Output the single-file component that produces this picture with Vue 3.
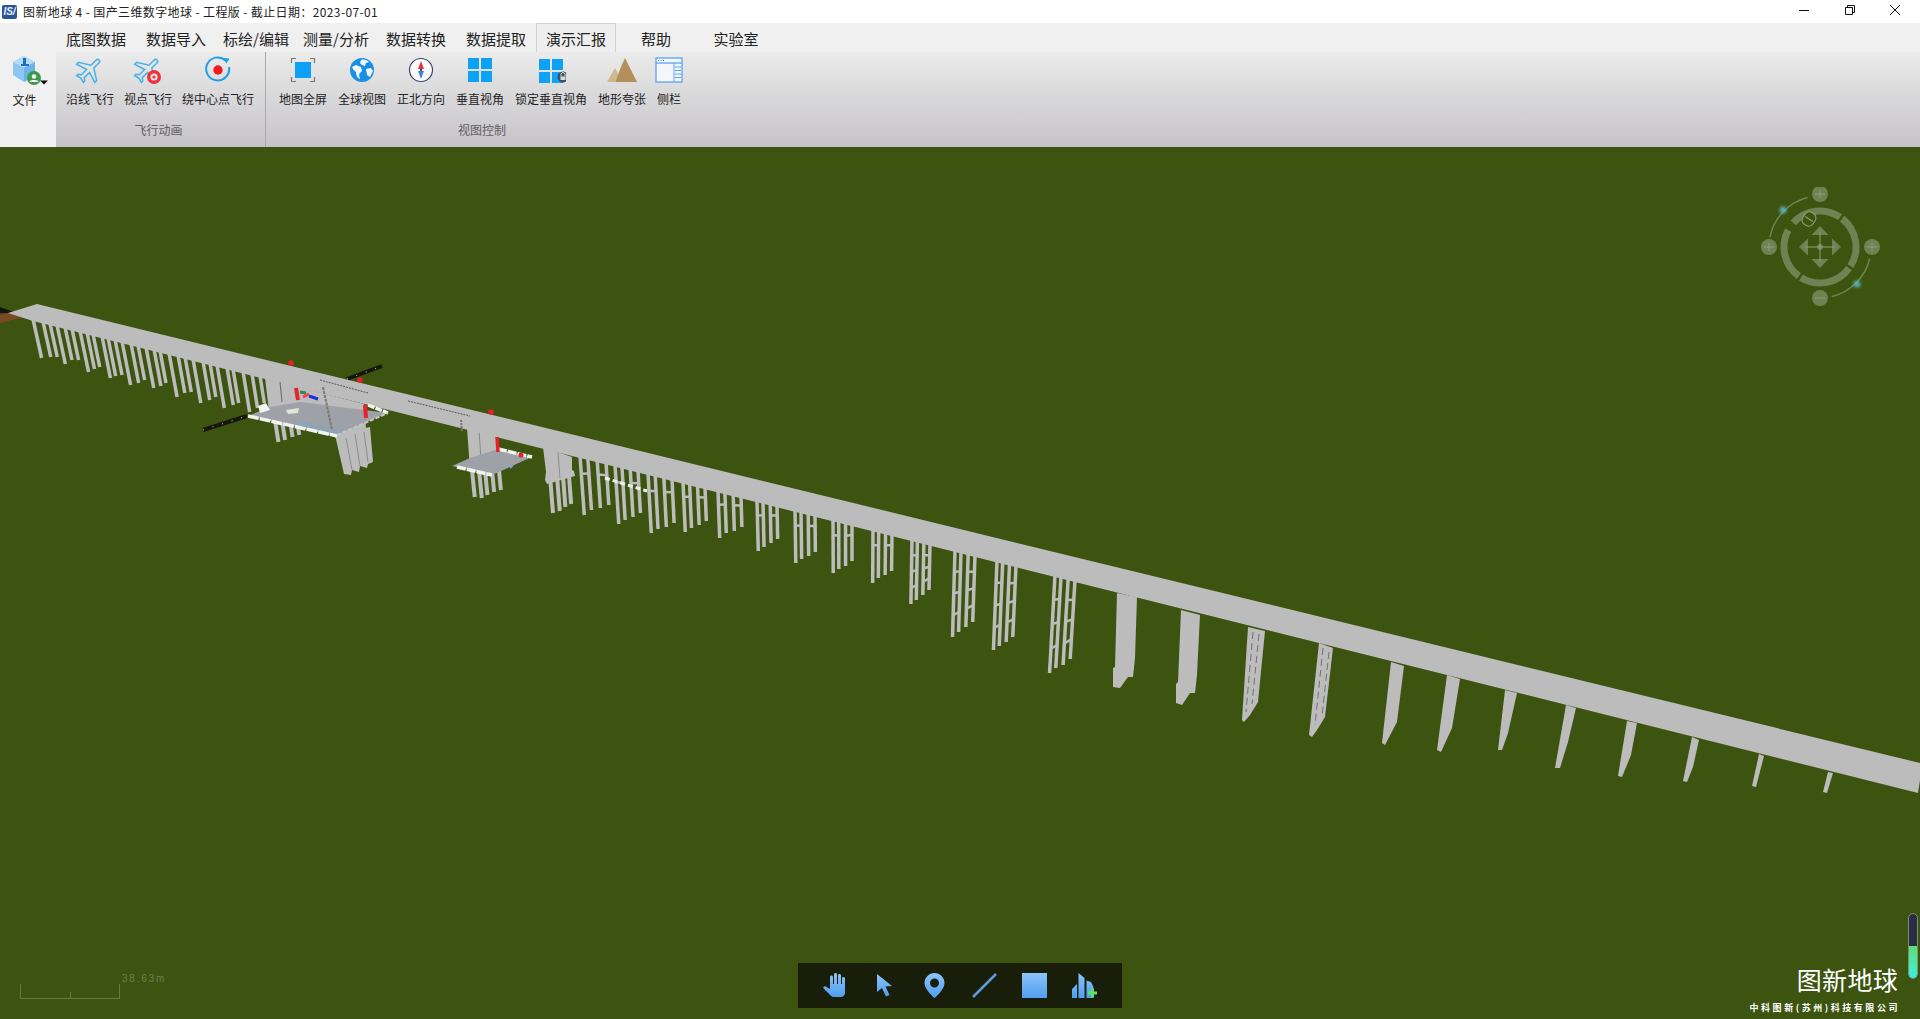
<template>
  <div class="app">
    <!-- title bar -->
    <div class="titlebar">
      <div class="logo"><span>IS/</span></div>
      <div class="title">图新地球 4 - 国产三维数字地球 - 工程版 - 截止日期：2023-07-01</div>
      <div class="winbtns">
        <div class="winbtn">
          <svg width="12" height="12" viewBox="0 0 12 12"><path d="M1 6.500h10" stroke="#111" fill="none" /></svg>
        </div>
        <div class="winbtn">
          <svg width="12" height="12" viewBox="0 0 12 12"><path d="M1.500 3.500h7v7h-7zM3.500 3.500v-2h7v7h-2" stroke="#111" fill="none" /></svg>
        </div>
        <div class="winbtn">
          <svg width="12" height="12" viewBox="0 0 12 12"><path d="M1 1l10 10M11 1L1 11" stroke="#111" fill="none" /></svg>
        </div>
      </div>
    </div>

    <!-- menu tabs -->
    <div class="menubar">
      <div v-for="t in tabs" :key="t" class="tab" :class="{ active: t === '演示汇报' }">{{ t }}</div>
    </div>

    <!-- ribbon -->
    <div class="ribbon">
      <div class="filebtn">
        <svg width="46" height="34" viewBox="0 0 46 34">
          <path d="M22 1l11 6v13l-11 7-11-7V7z" fill="#8cc6f2" />
          <path d="M22 1l11 6-11 6-11-6z" fill="#b5dcf7" />
          <path d="M22 13l11-6v13l-11 7z" fill="#6eb2e8" />
          <path d="M21 3h3v6h3v2h-8V9h2z" fill="#1f6fc4" />
          <circle cx="32" cy="23" r="7" fill="#3d9a48" />
          <circle cx="32" cy="21.500" r="2.300" fill="#fff" />
          <path d="M27.500 27c.5-2.600 8.500-2.600 9 0z" fill="#fff" />
          <path d="M38 25.500h8l-4 4z" fill="#111" />
        </svg>
        <div class="label">文件</div>
      </div>

      <div v-for="g in groups" :key="g.name" class="group" :class="g.cls">
        <div class="btns">
          <div v-for="b in g.items" :key="b.label" class="rbtn">
            <div class="ricon">
              <svg v-if="b.icon === 'plane' || b.icon === 'planeView'" width="32" height="28" viewBox="0 0 32 28">
                <path transform="translate(16 14) rotate(45) scale(1.35) translate(-12 -12)" d="M21 16v-2l-8-5V3.500c0-.83-.67-1.500-1.500-1.500S10 2.670 10 3.500V9l-8 5v2l8-2.500V19l-2 1.500V22l3.500-1 3.500 1v-1.500L13 19v-5.500l8 2.500z" fill="none" stroke="#45b2ea" stroke-width="1.100" />
                <template v-if="b.icon === 'planeView'">
                  <circle cx="22" cy="21" r="7" fill="#e8353f" />
                  <circle cx="22" cy="21" r="3.600" fill="#f6dfe0" />
                  <circle cx="22" cy="21" r="1.600" fill="#e8353f" />
                </template>
              </svg>
              <svg v-else-if="b.icon === 'orbit'" width="28" height="28" viewBox="0 0 28 28">
                <path d="M21.500 4.500A11.500 11.500 0 1 0 25 11" fill="none" stroke="#1e9fe6" stroke-width="2" />
                <path d="M19 2l6.500.5-3 5z" fill="#1e9fe6" />
                <circle cx="14" cy="14" r="4.700" fill="#f01c24" />
              </svg>
              <svg v-else-if="b.icon === 'full'" width="26" height="26" viewBox="0 0 26 26">
                <path d="M1.500 6V1.500H6M20 1.500h4.500V6M24.500 20v4.500H20M6 24.500H1.500V20" fill="none" stroke="#777" stroke-width="1.200" />
                <rect x="5" y="5" width="16" height="16" fill="#0ea0f6" />
              </svg>
              <svg v-else-if="b.icon === 'globe'" width="26" height="26" viewBox="0 0 26 26">
                <circle cx="13" cy="13" r="12" fill="#1a8fe6" />
                <path d="M12 3c3-1 6 0 8 2l-3 1-1 3-3-1-2-2zM3 10l4-2 5 2 1 4-3 3 1 5c-3-1-4-4-4-7-2-1-3-3-4-5zM17 12l5-1 2 3-3 6-3-2z" fill="#f2f7fb" />
              </svg>
              <svg v-else-if="b.icon === 'north'" width="26" height="26" viewBox="0 0 26 26">
                <circle cx="13" cy="13" r="11.500" fill="#fbfbfd" stroke="#3b4668" stroke-width="1.200" />
                <path d="M13 4l3 8h-6z" fill="#e8333a" />
                <path d="M13 22l-3-8h6z" fill="#3a86e0" />
                <circle cx="13" cy="13" r="1.200" fill="#3b4668" />
              </svg>
              <svg v-else-if="b.icon === 'grid'" width="26" height="26" viewBox="0 0 26 26">
                <path d="M1 1h11v11H1zM14 1h11v11H14zM1 14h11v11H1zM14 14h11v11H14z" fill="#0ea2f6" />
              </svg>
              <svg v-else-if="b.icon === 'gridLock'" width="30" height="28" viewBox="0 0 30 28">
                <path d="M3 3h11v11H3zM16 3h11v11H16zM3 16h11v11H3zM16 16h11v11H16z" fill="#0ea2f6" />
                <circle cx="27" cy="21" r="5.500" fill="#40505c" />
                <path d="M25 20.500v-2a2 2 0 0 1 4 0v2" fill="none" stroke="#d8dde0" />
                <rect x="24.500" y="20.500" width="5" height="3.500" fill="#d8dde0" />
              </svg>
              <svg v-else-if="b.icon === 'terrain'" width="32" height="26" viewBox="0 0 32 26">
                <path d="M9 11l8 14H1z" fill="#cdb98e" />
                <path d="M19 1l12 24H9.500L14.500 11z" fill="#b3905a" />
              </svg>
              <svg v-else-if="b.icon === 'side'" width="28" height="26" viewBox="0 0 28 26">
                <rect x="1" y="1" width="26" height="24" fill="#f3f7fc" stroke="#5aa5ef" stroke-width="1.300" />
                <path d="M1 6h26" stroke="#5aa5ef" stroke-width="1.300" />
                <path d="M19 6v19M20 10h6M20 13.500h6M20 17h6M20 20.500h6" stroke="#5aa5ef" />
                <path d="M3 3.500h1M5.500 3.500h1M8 3.500h1" stroke="#4a7fb8" />
              </svg>
            </div>
            <div class="label">{{ b.label }}</div>
          </div>
        </div>
        <div class="gname">{{ g.name }}</div>
      </div>
    </div>

    <!-- 3D viewport -->
    <div class="viewport">
      <svg class="scene" viewBox="0 147 1920 872" preserveAspectRatio="none">
        <!-- far bank at the left edge -->
        <polygon points="0,323 28,316 12,312 0,315" fill="#7a4a22" />
        <polygon points="0,307 14,312 10,313 0,313" fill="#15160f" />

        <!-- trestle -->
        <line x1="203" y1="430" x2="247" y2="416" stroke="#15160f" stroke-width="4" />
        <line x1="203" y1="430" x2="247" y2="416" stroke="#cfcfc8" stroke-width="1" stroke-dasharray="1 9" />
        <line x1="347" y1="379" x2="382" y2="366" stroke="#15160f" stroke-width="4" />
        <line x1="347" y1="379" x2="382" y2="366" stroke="#cfcfc8" stroke-width="1" stroke-dasharray="1 9" />

        <g fill="#bcbcbc">
          <line v-for="(l, i) in legs" :key="'l' + i" :x1="l.x1" :y1="l.y1" :x2="l.x2" :y2="l.y2" stroke="#bcbcbc" :stroke-width="l.w" />
          <polygon v-for="(p, i) in solids" :key="'s' + i" :points="p" />
        </g>

        <!-- dark joints on the multi column piers -->
        <g stroke="#6e7278" stroke-dasharray="7 4" fill="none">
          <line x1="1253" y1="632" x2="1246" y2="712" />
          <line x1="1259" y1="634" x2="1252" y2="704" />
          <line x1="1323" y1="648" x2="1315" y2="725" />
          <line x1="1329" y1="652" x2="1322" y2="716" />
        </g>
        <g stroke="#8a8d90" fill="none">
          <line x1="346" y1="438" x2="352" y2="470" />
          <line x1="355" y1="434" x2="360" y2="466" />
          <line x1="364" y1="432" x2="368" y2="462" />
          <line x1="479" y1="430" x2="481" y2="460" />
          <line x1="558" y1="452" x2="560" y2="478" />
        </g>

        <!-- white handrail between spans -->
        <line x1="605" y1="478" x2="647" y2="491" stroke="#f1f1ea" stroke-width="3" stroke-dasharray="5 3" />

        <!-- deck -->
        <polygon points="8,313 37,304 1920,763 1920,780 1918,793 33,321" fill="#bcbcbc" />

        <!-- markings on the deck -->
        <g stroke="#54585c" stroke-width="1" stroke-dasharray="2 1" fill="none">
          <line x1="320" y1="380" x2="368" y2="393" />
          <line x1="408" y1="401" x2="470" y2="416" />
        </g>
        <line x1="280" y1="382" x2="282" y2="402" stroke="#666" />
        <line x1="461" y1="420" x2="462" y2="432" stroke="#777" stroke-width="2" stroke-dasharray="2 1" />

        <!-- platform one -->
        <polygon points="248,416 270,407 300,402 388,413 337,435" fill="#9ea2a8" />
        <polygon points="290,424 337,435 345,432 298,420" fill="#8fa3b5" />
        <polygon points="286,410 299,408 298,413 288,414" fill="#e6e2d4" />
        <line x1="248" y1="416" x2="337" y2="436" stroke="#f2f2ee" stroke-width="3.500" stroke-dasharray="11 1" />
        <line x1="368" y1="405" x2="388" y2="413" stroke="#f2f2ee" stroke-width="3.500" stroke-dasharray="7 1" />
        <line x1="337" y1="435" x2="388" y2="413" stroke="#c3c7c8" stroke-width="2" stroke-dasharray="4 2" />
        <polygon points="258,406 266,403 270,410 260,413" fill="#f4f4f0" />
        <line x1="323" y1="387" x2="332" y2="430" stroke="#7a7872" stroke-width="2" stroke-dasharray="3 1" />
        <line x1="296" y1="388" x2="298" y2="400" stroke="#e8202a" stroke-width="4" />
        <line x1="365" y1="405" x2="366" y2="418" stroke="#e8202a" stroke-width="4" />
        <line x1="300" y1="392" x2="306" y2="393" stroke="#2d8a4a" stroke-width="3" />
        <line x1="309" y1="396" x2="318" y2="399" stroke="#2030d8" stroke-width="3" />
        <line x1="303" y1="397" x2="309" y2="394" stroke="#f04050" stroke-width="3" />

        <!-- platform two -->
        <polygon points="452,466 470,458 498,449 532,457 492,475" fill="#9ea2a8" />
        <line x1="457" y1="467" x2="492" y2="475" stroke="#f2f2ee" stroke-width="3.500" stroke-dasharray="9 1" />
        <line x1="498" y1="449" x2="532" y2="457" stroke="#f2f2ee" stroke-width="3.500" stroke-dasharray="9 1" />
        <line x1="497" y1="437" x2="498" y2="452" stroke="#e8202a" stroke-width="3.500" />
        <circle cx="521" cy="455" r="2.500" fill="#e8202a" />
        <line x1="510" y1="468" x2="513" y2="465" stroke="#6fa4dc" stroke-width="2" />

        <!-- red marks on top -->
        <circle cx="291" cy="363" r="2.800" fill="#e8202a" />
        <circle cx="360" cy="380" r="2.800" fill="#e8202a" />
        <circle cx="491" cy="412" r="2.800" fill="#e8202a" />
      </svg>

      <!-- navigation ring -->
      <svg class="nav" width="120" height="120" viewBox="0 0 120 120">
        <defs>
          <filter id="navglow" x="-100%" y="-100%" width="300%" height="300%"><feGaussianBlur stdDeviation="1.500" /></filter>
        </defs>
        <g fill="none" stroke="#6f8254">
          <path v-for="(a, i) in navArcs" :key="i" :d="a" stroke-width="7" />
          <path :d="navOuter[0]" stroke-width="1.500" />
          <path :d="navOuter[1]" stroke-width="1.500" />
          <rect x="43" y="25" width="12" height="14" rx="5" transform="rotate(34 49 32)" stroke="#94a37c" fill="#3c5410" />
          <path d="M44.500 32h9" stroke="#94a37c" transform="rotate(34 49 32)" />
        </g>
        <circle cx="23" cy="23" r="3.500" fill="#5fc4d2" opacity=".8" filter="url(#navglow)" />
        <circle cx="97" cy="97" r="3.500" fill="#5fc4d2" opacity=".8" filter="url(#navglow)" />
        <g fill="#6f8254">
          <circle cx="60" cy="7" r="8" />
          <circle cx="9" cy="60" r="8" />
          <circle cx="112" cy="60" r="8" />
          <circle cx="60" cy="111" r="8" />
          <path d="M60 39l8.500 9h-17zM60 81l-8.500-9h17zM39 60l9-8.500v17zM81 60l-9 8.500v-17z" />
          <circle cx="60" cy="60" r="3" />
        </g>
        <path d="M60 45v30M45 60h30M55 7h10M60 3v8M4 60h10M9 56v8M107 60h10M112 56v8M55 111h10" stroke="#8e9e76" fill="none" />
      </svg>

      <!-- scale -->
      <div class="scale">
        <div class="scalebar"><i class="tick"></i></div>
        <span class="scaletext">38.63m</span>
      </div>

      <!-- bottom tools -->
      <div class="tools">
        <svg class="defs" width="0" height="0">
          <defs>
            <linearGradient id="toolfill" x1="0" y1="0" x2="0" y2="1">
              <stop offset="0" stop-color="#8cc4fb" />
              <stop offset="1" stop-color="#4f9ef0" />
            </linearGradient>
          </defs>
        </svg>
        <div v-for="t in tools" :key="t.name" class="tool">
          <svg width="25" height="25" viewBox="0 0 25 25">
            <path v-if="t.d" :d="t.d" fill="url(#toolfill)" fill-rule="evenodd" />
            <path v-if="t.name === 'line'" d="M1 24L24 1" stroke="#5d9cdc" stroke-width="2.500" fill="none" />
            <path v-if="t.name === 'chart'" d="M20.500 15.500v9M16 20h9" stroke="#62dc6e" stroke-width="3" fill="none" />
          </svg>
        </div>
      </div>

      <!-- branding -->
      <div class="height"><i></i></div>
      <div class="brand">图新地球</div>
      <div class="company">中科图新(苏州)科技有限公司</div>
    </div>
  </div>
</template>

<script setup>
const tabs = ['底图数据', '数据导入', '标绘/编辑', '测量/分析', '数据转换', '数据提取', '演示汇报', '帮助', '实验室']

const groups = [
  {
    name: '飞行动画',
    cls: 'fly',
    items: [
      { label: '沿线飞行', icon: 'plane' },
      { label: '视点飞行', icon: 'planeView' },
      { label: '绕中心点飞行', icon: 'orbit' },
    ],
  },
  {
    name: '视图控制',
    cls: 'view',
    items: [
      { label: '地图全屏', icon: 'full' },
      { label: '全球视图', icon: 'globe' },
      { label: '正北方向', icon: 'north' },
      { label: '垂直视角', icon: 'grid' },
      { label: '锁定垂直视角', icon: 'gridLock' },
      { label: '地形夸张', icon: 'terrain' },
      { label: '侧栏', icon: 'side' },
    ],
  },
]

const tools = [
  { name: 'hand', d: 'M23 5.500V20c0 2.200-1.800 4-4 4h-7.300c-1.080 0-2.100-.43-2.850-1.190L1 14.830s1.260-1.230 1.300-1.250c.22-.19.49-.29.79-.29.22 0 .42.06.6.16.04.01 4.310 2.460 4.310 2.460V4c0-.83.67-1.500 1.500-1.500S11 3.170 11 4v7h1V1.500c0-.83.67-1.500 1.500-1.500S15 .67 15 1.500V11h1V2.500c0-.83.67-1.500 1.500-1.500s1.500.67 1.500 1.500V11h1V5.500c0-.83.67-1.500 1.500-1.500s1.500.67 1.500 1.500z' },
  { name: 'arrow', d: 'M5 1v18l5-4 4 8.500 3.500-1.500-4-8.500 6.500-.5z' },
  { name: 'pin', d: 'M12.500 0C7 0 2.500 4.500 2.500 10c0 7 10 15 10 15s10-8 10-15c0-5.500-4.500-10-10-10zM12.500 5.500a4.500 4.500 0 1 1 0 9 4.500 4.500 0 0 1 0-9z' },
  { name: 'line' },
  { name: 'square', d: 'M0 0h25v25H0z' },
  { name: 'chart', d: 'M0 16l5-5v14H0zM6.500 0l6 5v20h-6zM14.500 7.500L19 9l2.500 5v11h-7z' },
]

// bridge geometry, in page pixels
const underDeck = (x) => 321 + (x - 33) * 0.2504

function leg(x, bottom, w = 3.500, top = null) {
  const y1 = top === null ? underDeck(x) - 2 : top
  const lean = (850 - x) * 0.00027
  return { x1: x, y1, x2: x + lean * (bottom - y1), y2: bottom, w }
}

const singles = [
  [33, 358], [43, 357], [50, 357], [57, 364], [65, 360], [72, 360], [80, 372], [87, 369], [93, 367], [102, 378],
  [108, 376], [115, 375], [122, 385], [131, 383], [138, 380], [146, 388], [154, 386], [160, 383], [169, 397], [178, 393],
  [185, 392], [193, 403], [203, 400], [210, 397], [217, 408], [227, 405], [233, 403], [243, 412], [252, 408], [260, 403],
]

// x start, x end, bottoms of the four columns
const ladders = [
  [580, 606, 515, 510, 508, 505],
  [615, 638, 524, 520, 517, 513],
  [648, 672, 533, 529, 527, 523],
  [683, 705, 532, 528, 525, 521],
  [718, 741, 538, 533, 531, 527],
  [757, 777, 551, 547, 543, 539],
  [795, 815, 563, 559, 556, 552],
  [833, 852, 573, 569, 566, 561],
  [873, 892, 583, 578, 575, 571],
  [912, 930, 604, 600, 595, 590],
  [955, 975, 637, 632, 627, 622],
  [997, 1016, 650, 646, 642, 637],
  [1055, 1075, 673, 668, 665, 659],
]

const legs = [
  ...singles.map(([x, b]) => leg(x, b)),
  // under the two platforms and the big pier
  ...[[275, 442], [282, 440], [290, 437], [297, 435]].map(([x, b]) => leg(x, b, 4, 420)),
  ...[[472, 497], [479, 498], [485, 495], [492, 492], [499, 490]].map(([x, b]) => leg(x, b, 4, 470)),
  ...[[550, 513], [557, 511], [563, 507], [569, 504]].map(([x, b]) => leg(x, b, 4, 476)),
]

ladders.forEach(([a, b, ...bottoms]) => {
  const cols = [0, 0.3, 0.66, 1].map((f, i) => leg(a + (b - a) * f, bottoms[i]))
  const levels = a > 900 ? [0.25, 0.5, 0.75] : [0.3]
  levels.forEach((f) => {
    ;[[0, 1], [2, 3]].forEach(([p, q]) => {
      const at = (c) => ({ x: c.x1 + (c.x2 - c.x1) * f, y: c.y1 + (c.y2 - c.y1) * f })
      const s = at(cols[p])
      const e = at(cols[q])
      legs.push({ x1: s.x, y1: s.y, x2: e.x, y2: e.y, w: 2.500 })
    })
  })
  legs.push(...cols)
})

const solids = [
  // main piers at the river crossing
  '265,378 364,404 366,428 337,437 270,420',
  '335,435 370,427 373,462 368,464 367,468 360,466 359,472 352,470 351,475 344,474',
  '467,428 497,436 497,470 470,470',
  '543,447 572,457 572,470 574,471 575,476 547,484 545,480 546,472',
  // solid and stepped piers, left to right
  '1117,593 1137,597 1135,658 1133,677 1128,677 1120,688 1113,687 1113,668 1115,667',
  '1181,610 1200,615 1197,675 1195,693 1190,693 1182,705 1176,703 1176,684 1178,682',
  '1248,627 1265,631 1258,702 1250,715 1244,722 1242,720',
  '1319,643 1333,648 1325,717 1317,730 1312,737 1309,735',
  '1391,662 1404,666 1397,722 1385,745 1382,743',
  '1447,675 1460,679 1452,728 1441,752 1437,750',
  '1505,690 1517,693 1508,733 1502,750 1498,750',
  '1566,705 1576,708 1568,742 1560,768 1555,768',
  '1627,721 1637,723 1631,755 1622,777 1618,776',
  '1692,737 1699,740 1693,767 1687,782 1683,781',
  '1759,754 1764,756 1756,787 1752,786',
  '1828,772 1833,773 1827,793 1823,792',
]

// navigation ring arcs, angles clockwise from east
function arc(r, from, to) {
  const p = (a) => [60 + r * Math.cos((a * Math.PI) / 180), 60 + r * Math.sin((a * Math.PI) / 180)]
  const [x1, y1] = p(from)
  const [x2, y2] = p(to)
  return `M${x1} ${y1}A${r} ${r} 0 ${to - from > 180 ? 1 : 0} 1 ${x2} ${y2}`
}

const navArcs = [arc(36, -52, 32), arc(36, 36, 122), arc(36, 126, 208), arc(36, 222, 304)]
const navOuter = [arc(51, 191, 256), arc(51, 13, 77)]
</script>

<style>
html, body { margin: 0; height: 100%; overflow: hidden; }
</style>

<style scoped>
.app {
  display: flex;
  flex-direction: column;
  height: 1019px;
  overflow: hidden;
  font-family: "Noto Sans CJK SC", "Liberation Sans", sans-serif;
  color: #222;
}

.titlebar {
  display: flex;
  align-items: center;
  height: 23px;
  background: #fff;
  flex: none;
}
.logo {
  width: 15px;
  height: 14px;
  margin: 0 6px 0 2px;
  background: #27559c;
  border-radius: 2px;
  display: flex;
  align-items: center;
  justify-content: center;
}
.logo span {
  color: #e8eef8;
  font: italic bold 10px "Liberation Sans", sans-serif;
}
.title { flex: 1; font-size: 12px; letter-spacing: .38px; color: #222; white-space: nowrap; }
.winbtns { display: flex; align-self: flex-start; padding-right: 2px; }
.winbtn {
  width: 45.500px;
  height: 20px;
  display: flex;
  align-items: center;
  justify-content: center;
}

.menubar {
  display: flex;
  height: 29px;
  flex: none;
  padding-left: 56px;
  background: #f0f0f0;
}
.tab {
  width: 80px;
  box-sizing: border-box;
  padding-top: 4px;
  font-size: 15px;
  line-height: 23px;
  text-align: center;
  white-space: nowrap;
  color: #222;
}
.tab.active {
  border: 1px solid #d0d0d0;
  border-bottom: 0;
  padding-top: 3px;
  background: #eeeeee;
}

.ribbon {
  display: flex;
  height: 95px;
  flex: none;
  background: linear-gradient(#ebebeb, #c5c3c6);
}
.filebtn {
  width: 56px;
  flex: none;
  background: #f0f0f0;
  padding: 3px 7px 0 0;
  box-sizing: border-box;
  display: flex;
  flex-direction: column;
  align-items: center;
}
.filebtn svg { flex: none; }
.filebtn .label { margin-top: 3px; }

.group { display: flex; flex-direction: column; box-sizing: border-box; }
.group.fly { width: 210px; padding-left: 5px; border-right: 1px solid #a9a9a9; }
.group.view { width: 432px; padding-left: 8px; }
.btns { display: flex; height: 70px; }
.view .btns { gap: 1px; }
.view .rbtn:last-child { margin-left: -2px; }
.rbtn {
  display: flex;
  flex-direction: column;
  align-items: center;
  padding: 4px 5px 0;
}
.ricon {
  height: 28px;
  display: flex;
  align-items: center;
  justify-content: center;
}
.label {
  font-size: 12px;
  line-height: 16px;
  margin-top: 7px;
  white-space: nowrap;
  color: #222;
}
.gname {
  font-size: 12px;
  line-height: 16px;
  text-align: center;
  color: #5f5f5f;
}
.fly .gname { padding-right: 9px; }
.view .gname { padding-right: 8px; }

.viewport {
  position: relative;
  flex: 1;
  min-height: 0;
  background: #3c5410;
  overflow: hidden;
}
.scene { display: block; width: 100%; height: 100%; }
.nav { position: absolute; top: 40px; right: 40px; }

.scale {
  position: absolute;
  left: 20px;
  top: 826px;
  display: flex;
  align-items: flex-start;
}
.scalebar {
  position: relative;
  width: 100px;
  height: 15px;
  margin-top: 11px;
  border: 1px solid rgba(255, 255, 255, .22);
  border-top: 0;
  box-sizing: border-box;
}
.tick {
  position: absolute;
  left: 50%;
  bottom: 0;
  height: 6px;
  border-left: 1px solid rgba(255, 255, 255, .22);
}
.scaletext {
  margin-left: 2px;
  font: 10px/12px "Liberation Sans", sans-serif;
  letter-spacing: 1.800px;
  color: rgba(255, 255, 255, .26);
}

.tools {
  position: absolute;
  left: 798px;
  bottom: 11px;
  display: flex;
  align-items: center;
  height: 45px;
  padding: 0 13px 0 11px;
  background: #191e0b;
}
.defs { position: absolute; }
.tool {
  width: 50px;
  display: flex;
  justify-content: center;
}

.height {
  position: absolute;
  right: 2px;
  top: 766px;
  width: 10px;
  height: 66px;
  box-sizing: border-box;
  border: 1px solid #7e8f74;
  border-radius: 5px;
  background: #2a2d45;
  overflow: hidden;
  display: flex;
  align-items: flex-end;
}
.height i {
  display: block;
  width: 100%;
  height: 32px;
  background: linear-gradient(#5fdc78, #3cf0dc);
}
.brand {
  position: absolute;
  right: 22px;
  top: 816px;
  font-size: 25px;
  letter-spacing: .3px;
  line-height: 32px;
  color: #fff;
  white-space: nowrap;
}
.company {
  position: absolute;
  right: 20px;
  top: 854px;
  font-size: 9px;
  line-height: 14px;
  font-weight: 700;
  letter-spacing: 2.550px;
  color: #fff;
  white-space: nowrap;
}
</style>
